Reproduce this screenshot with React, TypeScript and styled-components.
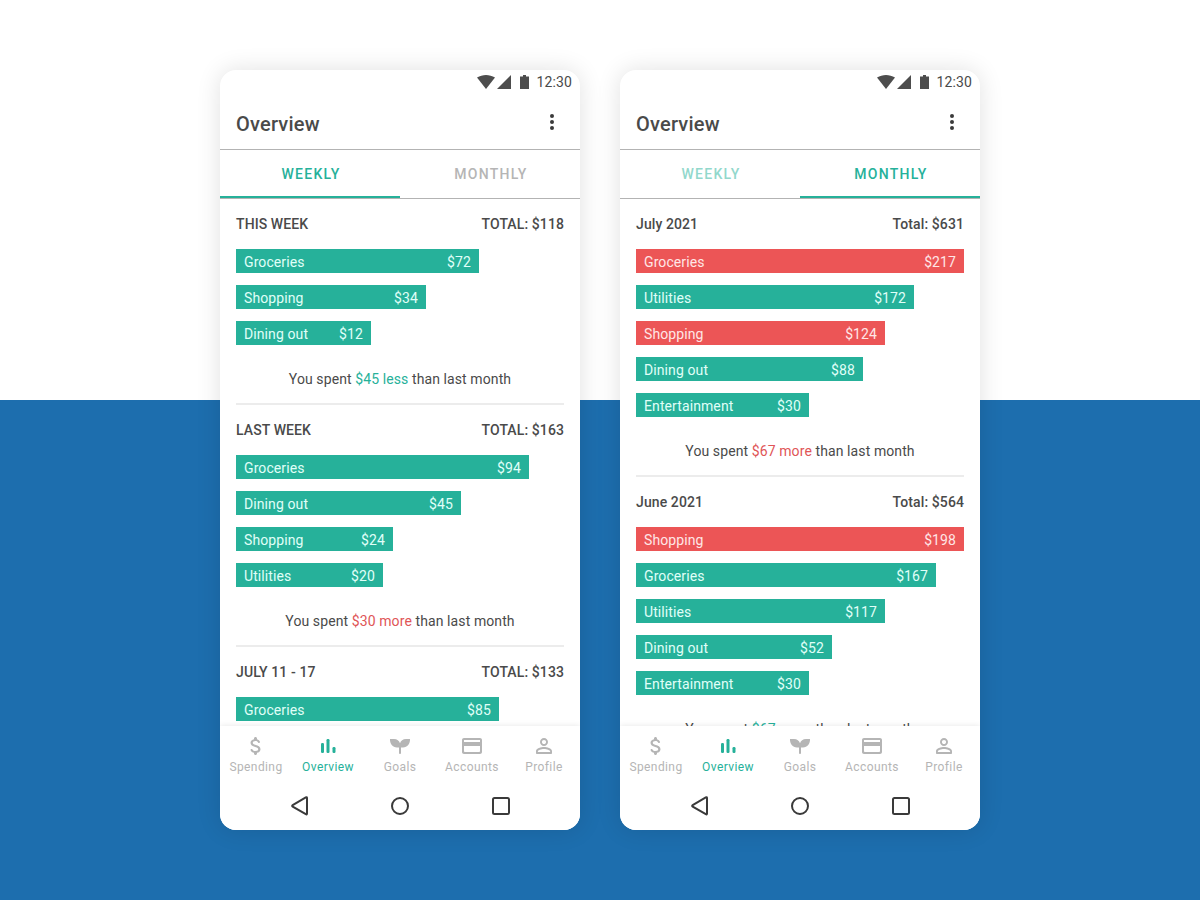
import React from "react";
import styled, { createGlobalStyle } from "styled-components";

const teal = "#26b19a";
const red = "#ec5556";
const ink = "#4a4a4a";
const muted = "#b5b5b5";

const GlobalStyle = createGlobalStyle`
  *, *::before, *::after { box-sizing: border-box; }
  body {
    margin: 0;
    font-family: Roboto, "Liberation Sans", sans-serif;
    color: ${ink};
  }
  h1, h2, p, ul { margin: 0; padding: 0; }
  ul { list-style: none; }
  button { font: inherit; border: 0; padding: 0; background: none; cursor: pointer; }
  svg { display: block; }
`;

const Page = styled.main`
  min-height: 100vh;
  display: flex;
  flex-wrap: wrap;
  justify-content: center;
  align-items: center;
  gap: 40px;
  padding: 70px 20px;
  background: linear-gradient(#fff calc(50% - 50px), #1d6eae calc(50% - 50px));
`;

const Phone = styled.section`
  flex: 0 1 360px;
  height: calc(100vh - 140px);
  min-height: 560px;
  display: flex;
  flex-direction: column;
  overflow: hidden;
  background: #fff;
  border-radius: 16px;
  box-shadow: 0 0 24px rgba(0, 0, 0, 0.12);
`;

const StatusBar = styled.div`
  display: flex;
  justify-content: flex-end;
  align-items: center;
  height: 24px;
  padding: 0 8px;
  font-size: 14px;
  line-height: 24px;
  letter-spacing: 0.01em;
  flex: none;
`;

const Clock = styled.time`
  margin-left: 6px;
`;

const AppBar = styled.header`
  display: flex;
  justify-content: space-between;
  align-items: center;
  height: 56px;
  padding: 0 16px;
  border-bottom: 1px solid #b3b3b3;
  flex: none;
`;

const Title = styled.h1`
  padding-top: 4px;
  font-size: 20px;
  line-height: 24px;
  font-weight: 500;
  letter-spacing: 0.01em;
`;

const IconButton = styled.button`
  width: 24px;
  height: 24px;
  color: #3a3a3a;
`;

const Tabs = styled.div`
  display: flex;
  height: 49px;
  border-bottom: 1px solid #b3b3b3;
  flex: none;
`;

const Tab = styled.button<{ $active: boolean; $color: string }>`
  flex: 1;
  padding: 2px 0 0 2px;
  border-bottom: 2px solid ${(p) => (p.$active ? teal : "transparent")};
  color: ${(p) => p.$color};
  font-size: 14px;
  line-height: 16px;
  font-weight: 500;
  letter-spacing: 0.09em;
`;

const Feed = styled.div`
  flex: 1;
  min-height: 0;
  overflow: hidden;
  padding: 0 16px;
`;

const Period = styled.article`
  display: flex;
  flex-direction: column;
`;

const PeriodHead = styled.header`
  display: flex;
  justify-content: space-between;
  padding: 15px 0;
  font-size: 14px;
  line-height: 20px;
  font-weight: 500;
  letter-spacing: 0.007em;
`;

const PeriodName = styled.h2`
  font: inherit;
`;

const Bars = styled.ul`
  display: flex;
  flex-direction: column;
  gap: 12px;
`;

const Bar = styled.li<{ $over: boolean }>`
  display: flex;
  justify-content: space-between;
  padding: 2px 8px 0;
  background: ${(p) => (p.$over ? red : teal)};
  color: ${(p) => (p.$over ? "#ffe6e6" : "#e0fff8")};
  font-size: 14px;
  line-height: 22px;
  letter-spacing: 0.007em;
`;

const Summary = styled.p`
  padding: 24px 0 14px;
  border-bottom: 2px solid #ececec;
  text-align: center;
  font-size: 14px;
  line-height: 20px;
  letter-spacing: 0.007em;
`;

const Delta = styled.span<{ $bad: boolean }>`
  color: ${(p) => (p.$bad ? "#e05557" : teal)};
`;

const BottomNav = styled.nav`
  display: flex;
  height: 56px;
  background: #fff;
  box-shadow: 0 0 6px rgba(0, 0, 0, 0.1);
  flex: none;
`;

const NavItem = styled.a<{ $active: boolean }>`
  flex: 1 1 0;
  display: flex;
  flex-direction: column;
  align-items: center;
  padding-top: 8px;
  text-decoration: none;
  color: ${(p) => (p.$active ? teal : muted)};
  font-size: 12px;
  line-height: 18px;
  letter-spacing: 0.033em;
`;

const SystemNav = styled.div`
  display: flex;
  justify-content: space-between;
  align-items: center;
  height: 48px;
  padding: 0 68px;
  background: #fff;
  flex: none;
`;

const Icon = ({ children }: { children: React.ReactNode }) => (
  <svg width="24" height="24" viewBox="0 0 24 24" fill="currentColor" aria-hidden="true">
    {children}
  </svg>
);

const navItems = [
  {
    label: "Spending",
    icon: (
      <path d="M11.8 10.9c-2.27-.59-3-1.2-3-2.15 0-1.09 1.01-1.85 2.7-1.85 1.42 0 2.13.54 2.39 1.4.12.4.45.7.87.7h.3c.66 0 1.13-.65.9-1.27-.42-1.18-1.4-2.16-2.96-2.54V4.5c0-.83-.67-1.5-1.5-1.5S10 3.67 10 4.5v.66c-1.94.42-3.5 1.68-3.5 3.61 0 2.31 1.91 3.46 4.7 4.13 2.5.6 3 1.48 3 2.41 0 .69-.49 1.79-2.7 1.79-1.65 0-2.5-.59-2.83-1.43-.15-.39-.49-.67-.9-.67h-.28c-.67 0-1.14.68-.89 1.3.57 1.39 1.9 2.21 3.4 2.53v.67c0 .83.67 1.5 1.5 1.5s1.5-.67 1.5-1.5v-.65c1.95-.37 3.5-1.5 3.5-3.55 0-2.84-2.43-3.81-4.7-4.4z" />
    ),
  },
  {
    label: "Overview",
    icon: (
      <>
        <rect x="5" y="9" width="3" height="10" rx="1.2" />
        <rect x="10.5" y="5" width="3" height="14" rx="1.2" />
        <rect x="16.5" y="13" width="3" height="6" rx="1.2" />
      </>
    ),
  },
  {
    label: "Goals",
    icon: (
      <path d="M2 5H6C9 5 11.300 6.700 12 9.300C12.700 6.700 15 5 18 5H22C22.300 9.800 19.300 13.500 15 13.500H13V19.200Q13 20 12 20Q11 20 11 19.200V13.500H9C4.700 13.500 1.700 9.800 2 5z" />
    ),
  },
  {
    label: "Accounts",
    icon: (
      <path d="M20 4H4c-1.110 0-1.990.890-1.990 2L2 18c0 1.110.890 2 2 2h16c1.110 0 2-.890 2-2V6c0-1.110-.890-2-2-2zm-1 14H5c-.550 0-1-.450-1-1v-5h16v5c0 .550-.450 1-1 1zm1-10H4V6h16v2z" />
    ),
  },
  {
    label: "Profile",
    icon: (
      <path d="M12 5.900c1.160 0 2.100.940 2.100 2.100s-.940 2.100-2.100 2.100S9.900 9.160 9.900 8s.940-2.100 2.100-2.100m0 9c2.970 0 6.100 1.460 6.100 2.100v1.100H5.900V17c0-.640 3.130-2.100 6.100-2.100M12 4C9.790 4 8 5.790 8 8s1.790 4 4 4 4-1.790 4-4-1.790-4-4-4zm0 9c-2.670 0-8 1.340-8 4v2c0 .550.450 1 1 1h14c.550 0 1-.450 1-1v-2c0-2.660-5.330-4-8-4z" />
    ),
  },
];

type Entry = { name: string; amount: number; length: number; over?: boolean };
type PeriodData = { name: string; total: string; entries: Entry[]; delta?: string; bad?: boolean };

const fullLength = 328;

const weekly: PeriodData[] = [
  {
    name: "THIS WEEK",
    total: "TOTAL: $118",
    entries: [
      { name: "Groceries", amount: 72, length: 243 },
      { name: "Shopping", amount: 34, length: 190 },
      { name: "Dining out", amount: 12, length: 135 },
    ],
    delta: "$45 less",
  },
  {
    name: "LAST WEEK",
    total: "TOTAL: $163",
    entries: [
      { name: "Groceries", amount: 94, length: 293 },
      { name: "Dining out", amount: 45, length: 225 },
      { name: "Shopping", amount: 24, length: 157 },
      { name: "Utilities", amount: 20, length: 147 },
    ],
    delta: "$30 more",
    bad: true,
  },
  {
    name: "JULY 11 - 17",
    total: "TOTAL: $133",
    entries: [{ name: "Groceries", amount: 85, length: 263 }],
  },
];

const monthly: PeriodData[] = [
  {
    name: "July 2021",
    total: "Total: $631",
    entries: [
      { name: "Groceries", amount: 217, length: 328, over: true },
      { name: "Utilities", amount: 172, length: 278 },
      { name: "Shopping", amount: 124, length: 249, over: true },
      { name: "Dining out", amount: 88, length: 227 },
      { name: "Entertainment", amount: 30, length: 173 },
    ],
    delta: "$67 more",
    bad: true,
  },
  {
    name: "June 2021",
    total: "Total: $564",
    entries: [
      { name: "Shopping", amount: 198, length: 328, over: true },
      { name: "Groceries", amount: 167, length: 300 },
      { name: "Utilities", amount: 117, length: 249 },
      { name: "Dining out", amount: 52, length: 196 },
      { name: "Entertainment", amount: 30, length: 173 },
    ],
    delta: "$67 more",
  },
];

function OverviewPhone({ mode, periods }: { mode: "weekly" | "monthly"; periods: PeriodData[] }) {
  const isWeekly = mode === "weekly";
  return (
    <Phone>
      <StatusBar>
        <svg width="53" height="16" viewBox="0 0 53 16" fill="#4d4d4d" aria-hidden="true">
          <path d="M0 3.600C5.500 0.100 12.500 0.100 18 3.600L9 15z" />
          <path d="M34 1v14H20z" />
          <path d="M46 1h3v1.500h3V15h-9V2.500h3z" />
        </svg>
        <Clock>12:30</Clock>
      </StatusBar>
      <AppBar>
        <Title>Overview</Title>
        <IconButton type="button" aria-label="More options">
          <Icon>
            <circle cx="12" cy="6" r="2" />
            <circle cx="12" cy="12" r="2" />
            <circle cx="12" cy="18" r="2" />
          </Icon>
        </IconButton>
      </AppBar>
      <Tabs role="tablist">
        <Tab type="button" role="tab" aria-selected={isWeekly} $active={isWeekly} $color={isWeekly ? teal : "#92d8cc"}>
          WEEKLY
        </Tab>
        <Tab type="button" role="tab" aria-selected={!isWeekly} $active={!isWeekly} $color={isWeekly ? muted : teal}>
          MONTHLY
        </Tab>
      </Tabs>
      <Feed>
        {periods.map((period) => (
          <Period key={period.name}>
            <PeriodHead>
              <PeriodName>{period.name}</PeriodName>
              <span>{period.total}</span>
            </PeriodHead>
            <Bars>
              {period.entries.map((entry) => (
                <Bar
                  key={entry.name}
                  $over={!!entry.over}
                  style={{ width: `${(entry.length / fullLength) * 100}%` }}
                >
                  <span>{entry.name}</span>
                  <span>${entry.amount}</span>
                </Bar>
              ))}
            </Bars>
            {period.delta && (
              <Summary>
                You spent <Delta $bad={!!period.bad}>{period.delta}</Delta> than last month
              </Summary>
            )}
          </Period>
        ))}
      </Feed>
      <BottomNav aria-label="Sections">
        {navItems.map((item) => (
          <NavItem key={item.label} href="#" $active={item.label === "Overview"}>
            <Icon>{item.icon}</Icon>
            {item.label}
          </NavItem>
        ))}
      </BottomNav>
      <SystemNav>
        <IconButton type="button" aria-label="Back">
          <Icon>
            <path
              d="M19 4V19.500Q19 20.900 17.800 20.200L4.700 12.600Q3.600 11.900 4.700 11.200L17.800 3.400Q19 2.700 19 4z"
              fill="none"
              stroke="currentColor"
              strokeWidth="2"
            />
          </Icon>
        </IconButton>
        <IconButton type="button" aria-label="Home">
          <Icon>
            <circle cx="12" cy="12" r="8" fill="none" stroke="currentColor" strokeWidth="2" />
          </Icon>
        </IconButton>
        <IconButton type="button" aria-label="Recent apps">
          <Icon>
            <rect x="5" y="4" width="16" height="16" rx="1.5" fill="none" stroke="currentColor" strokeWidth="2" />
          </Icon>
        </IconButton>
      </SystemNav>
    </Phone>
  );
}

export default function App() {
  return (
    <>
      <GlobalStyle />
      <Page>
        <OverviewPhone mode="weekly" periods={weekly} />
        <OverviewPhone mode="monthly" periods={monthly} />
      </Page>
    </>
  );
}
